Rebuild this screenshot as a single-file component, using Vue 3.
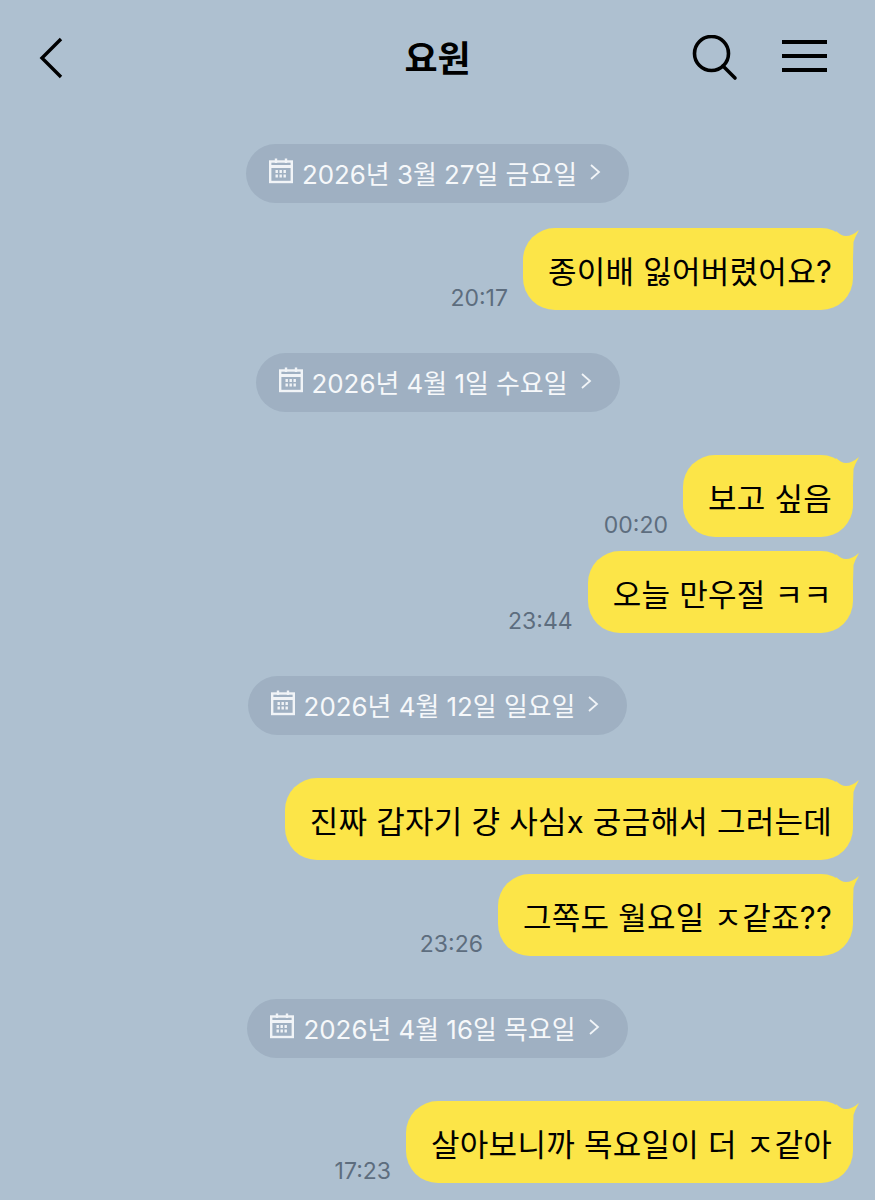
<script setup>
const sections = [
  { date: '2026년 3월 27일 금요일', first: true, messages: [{ text: '종이배 잃어버렸어요?', time: '20:17' }] },
  { date: '2026년 4월 1일 수요일', messages: [{ text: '보고 싶음', time: '00:20' }, { text: '오늘 만우절 ㅋㅋ', time: '23:44' }] },
  { date: '2026년 4월 12일 일요일', messages: [{ text: '진짜 갑자기 걍 사심x 궁금해서 그러는데' }, { text: '그쪽도 월요일 ㅈ같죠??', time: '23:26' }] },
  { date: '2026년 4월 16일 목요일', messages: [{ text: '살아보니까 목요일이 더 ㅈ같아', time: '17:23' }] },
]
</script>

<template>
  <div class="screen">
    <header class="top">
      <svg class="back" width="28" height="44" viewBox="0 0 28 44">
        <path d="M23 3 L4 22 L23 41" fill="none" stroke="#000" stroke-width="3.4" />
      </svg>
      <h1 class="name">요원</h1>
      <div class="actions">
        <svg class="search" width="48" height="50" viewBox="0 0 48 50">
          <circle cx="20.5" cy="18.5" r="17" fill="none" stroke="#000" stroke-width="3.6" />
          <path d="M32 31 L44 43" fill="none" stroke="#000" stroke-width="3.6" stroke-linecap="round" />
        </svg>
        <div class="menu"><span></span><span></span><span></span></div>
      </div>
    </header>

    <section v-for="s in sections" :key="s.date" class="day" :class="{ first: s.first }">
      <div class="pill">
        <svg class="cal" width="24" height="26" viewBox="0 0 24 26">
          <rect x="1.2" y="3.5" width="21.6" height="20.5" fill="none" stroke="#f1f4f7" stroke-width="2.4" />
          <path d="M1 8.5 H23" fill="none" stroke="#f1f4f7" stroke-width="3" />
          <path d="M7 0.5 V5 M17 0.5 V5" fill="none" stroke="#f1f4f7" stroke-width="2.4" />
          <path d="M6.5 13.5 h3 M10.5 13.5 h3 M14.5 13.5 h3 M6.5 18 h3 M10.5 18 h3 M14.5 18 h3" fill="none" stroke="#f1f4f7" stroke-width="3" stroke-dasharray="2.4 1.6" />
        </svg>
        <span class="date">{{ s.date }}</span>
        <svg class="chev" width="12" height="18" viewBox="0 0 12 18">
          <path d="M2 2 L10 9 L2 16" fill="none" stroke="#f1f4f7" stroke-width="1.8" />
        </svg>
      </div>
      <div class="list">
        <div v-for="m in s.messages" :key="m.text" class="row">
          <span v-if="m.time" class="time">{{ m.time }}</span>
          <div class="bubble">
            {{ m.text }}
            <svg class="tail" width="32" height="30" viewBox="0 0 32 30">
              <path d="M8 3 Q13 8 18 8 Q24 8 31 2 Q27 9 25.5 14 L25 30 L8 30 Z" fill="#fce548" />
            </svg>
          </div>
        </div>
      </div>
    </section>
  </div>
</template>

<style>
body {
  margin: 0;
  background: #aec0d0;
}
</style>

<style scoped>
.screen {
  height: 1200px;
  overflow: hidden;
  background: #aec0d0;
  font-family: "Inter", "Noto Sans CJK KR", sans-serif;
  color: #000;
}

.top {
  height: 115px;
  padding: 0 48px 0 38px;
  display: flex;
  align-items: center;
  justify-content: space-between;
  position: relative;
}

.name {
  position: absolute;
  left: 0;
  right: 0;
  top: 36px;
  margin: 0;
  text-align: center;
  font-size: 36px;
  line-height: 46px;
  font-weight: 700;
}

.actions {
  display: flex;
  align-items: center;
  gap: 43px;
}

.search {
  margin-top: 5px;
}

.menu {
  width: 45px;
  margin-top: -3px;
  display: flex;
  flex-direction: column;
  gap: 10px;
}

.menu span {
  height: 4px;
  background: #000;
}

.day {
  margin-top: 43px;
  display: flex;
  flex-direction: column;
  align-items: center;
}

.day.first {
  margin-top: 29px;
}

.pill {
  height: 59px;
  padding: 0 28px 0 23px;
  border-radius: 30px;
  background: #9fb0c2;
  color: #f6f8fa;
  font-size: 25.9px;
  display: flex;
  align-items: center;
}

.date {
  margin: -3px 12px 0 9px;
}

.cal {
  margin-top: -5px;
}

.chev {
  margin-top: -3px;
}

.list {
  width: 100%;
  margin-top: 43px;
  display: flex;
  flex-direction: column;
  gap: 14px;
}

.first .list {
  margin-top: 25px;
}

.row {
  display: flex;
  justify-content: flex-end;
  align-items: flex-end;
  gap: 15px;
  padding-right: 22px;
}

.time {
  font-size: 23px;
  line-height: 26px;
  margin-bottom: -1px;
  color: #5d6d7e;
}

.bubble {
  position: relative;
  height: 82px;
  padding: 0 21px 0 25px;
  border-radius: 32px;
  background: #fce548;
  font-size: 31px;
  letter-spacing: 0.25px;
  display: flex;
  align-items: center;
}

.tail {
  position: absolute;
  top: 0;
  right: -7px;
}
</style>
